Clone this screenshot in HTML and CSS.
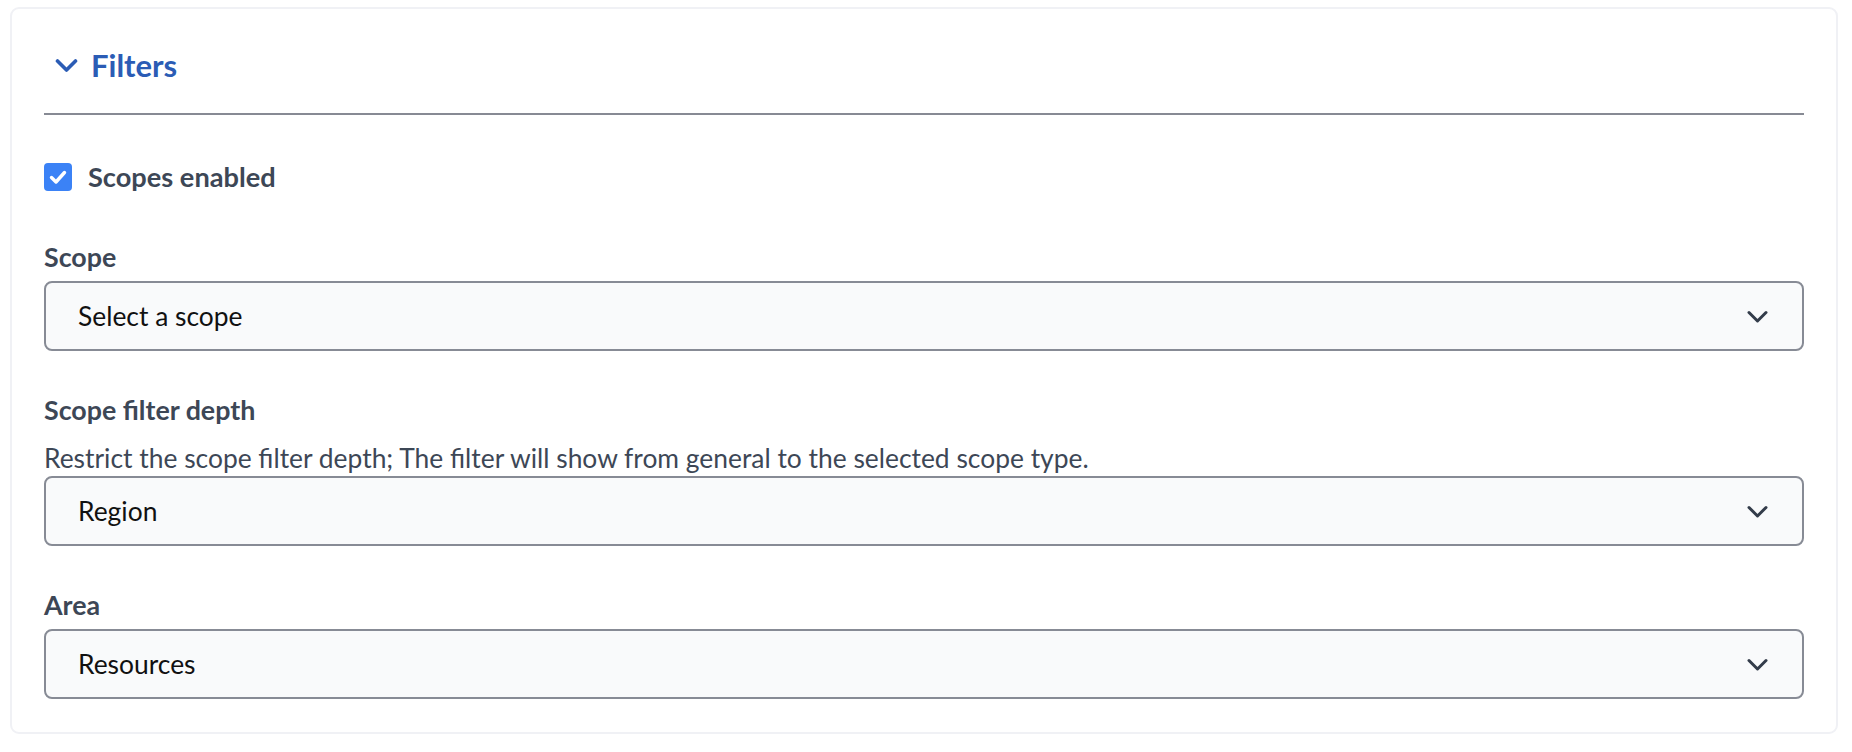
FILE: index.html
```html
<!DOCTYPE html>
<html lang="en">
<head>
<meta charset="utf-8">
<title>Filters</title>
<link rel="stylesheet" href="styles.css">
</head>
<body>
<div class="card">
  <div class="header">
    <svg class="header-chevron" width="23" height="15" viewBox="0 0 23 15"><path d="M2.5 3 L11.5 12 L20.5 3" fill="none" stroke="#2b5cb5" stroke-width="3.6" stroke-linecap="round" stroke-linejoin="round"/></svg>
    <span class="title">Filters</span>
  </div>
  <div class="divider"></div>
  <div class="check-row">
    <span class="checkbox"><svg width="28" height="28" viewBox="0 0 28 28"><path d="M7.5 14.5 L12 19 L20.5 9.5" fill="none" stroke="#fff" stroke-width="3.4" stroke-linecap="round" stroke-linejoin="round"/></svg></span>
    <span class="check-label">Scopes enabled</span>
  </div>
  <div class="field field-first">
    <div class="label">Scope</div>
    <div class="select"><span class="value">Select a scope</span><svg class="sel-chevron" width="21" height="13" viewBox="0 0 21 13"><path d="M2 2.5 L10.5 11 L19 2.5" fill="none" stroke="#333c4a" stroke-width="3" stroke-linecap="round" stroke-linejoin="round"/></svg></div>
  </div>
  <div class="field">
    <div class="label label-with-desc">Scope filter depth</div>
    <div class="desc">Restrict the scope filter depth; The filter will show from general to the selected scope type.</div>
    <div class="select"><span class="value">Region</span><svg class="sel-chevron" width="21" height="13" viewBox="0 0 21 13"><path d="M2 2.5 L10.5 11 L19 2.5" fill="none" stroke="#333c4a" stroke-width="3" stroke-linecap="round" stroke-linejoin="round"/></svg></div>
  </div>
  <div class="field field-last">
    <div class="label">Area</div>
    <div class="select"><span class="value">Resources</span><svg class="sel-chevron" width="21" height="13" viewBox="0 0 21 13"><path d="M2 2.5 L10.5 11 L19 2.5" fill="none" stroke="#333c4a" stroke-width="3" stroke-linecap="round" stroke-linejoin="round"/></svg></div>
  </div>
</div>
</body>
</html>
```
FILE: styles.css
```css
html, body {
  margin: 0;
  padding: 0;
  background: #ffffff;
}
body {
  padding: 7px 14px 0 10px;
  font-family: "Source Sans Pro", Lato, "Noto Sans", sans-serif;
  font-size: 26.4px;
  line-height: 36px;
  color: #3d4756;
}
.card {
  border: 2px solid #f0f1f5;
  border-radius: 9px;
  padding: 0 32px 33px 32px;
}
.header {
  display: flex;
  align-items: center;
  gap: 13px;
  padding: 36px 0 0 11px;
  margin-bottom: 28px;
}
.header-chevron {
  display: block;
}
.title {
  font-size: 31px;
  line-height: 40px;
  font-weight: 700;
  color: #2b5cb5;
}
.divider {
  height: 2px;
  background: #878a94;
}
.check-row {
  display: flex;
  align-items: center;
  gap: 16px;
  margin-top: 44px;
}
.checkbox {
  width: 28px;
  height: 28px;
  border-radius: 4px;
  background: #3b82f6;
  display: block;
}
.checkbox svg {
  display: block;
}
.check-label {
  font-weight: 700;
  font-size: 27.2px;
}
.field {
  margin-top: 41px;
}
.field-first {
  margin-top: 44px;
}
.field-last {
  margin-top: 41px;
}
.label {
  font-weight: 700;
  font-size: 26.8px;
  margin-bottom: 6px;
}
.label-with-desc {
  margin-bottom: 12px;
}
.desc {
  font-weight: 400;
}
.select {
  height: 70px;
  box-sizing: border-box;
  border: 2px solid #878b95;
  border-radius: 8px;
  background: #f9fafb;
  display: flex;
  align-items: center;
  justify-content: space-between;
  padding: 0 34px 0 32px;
}
.value {
  color: #111111;
}
.sel-chevron {
  display: block;
}
```
